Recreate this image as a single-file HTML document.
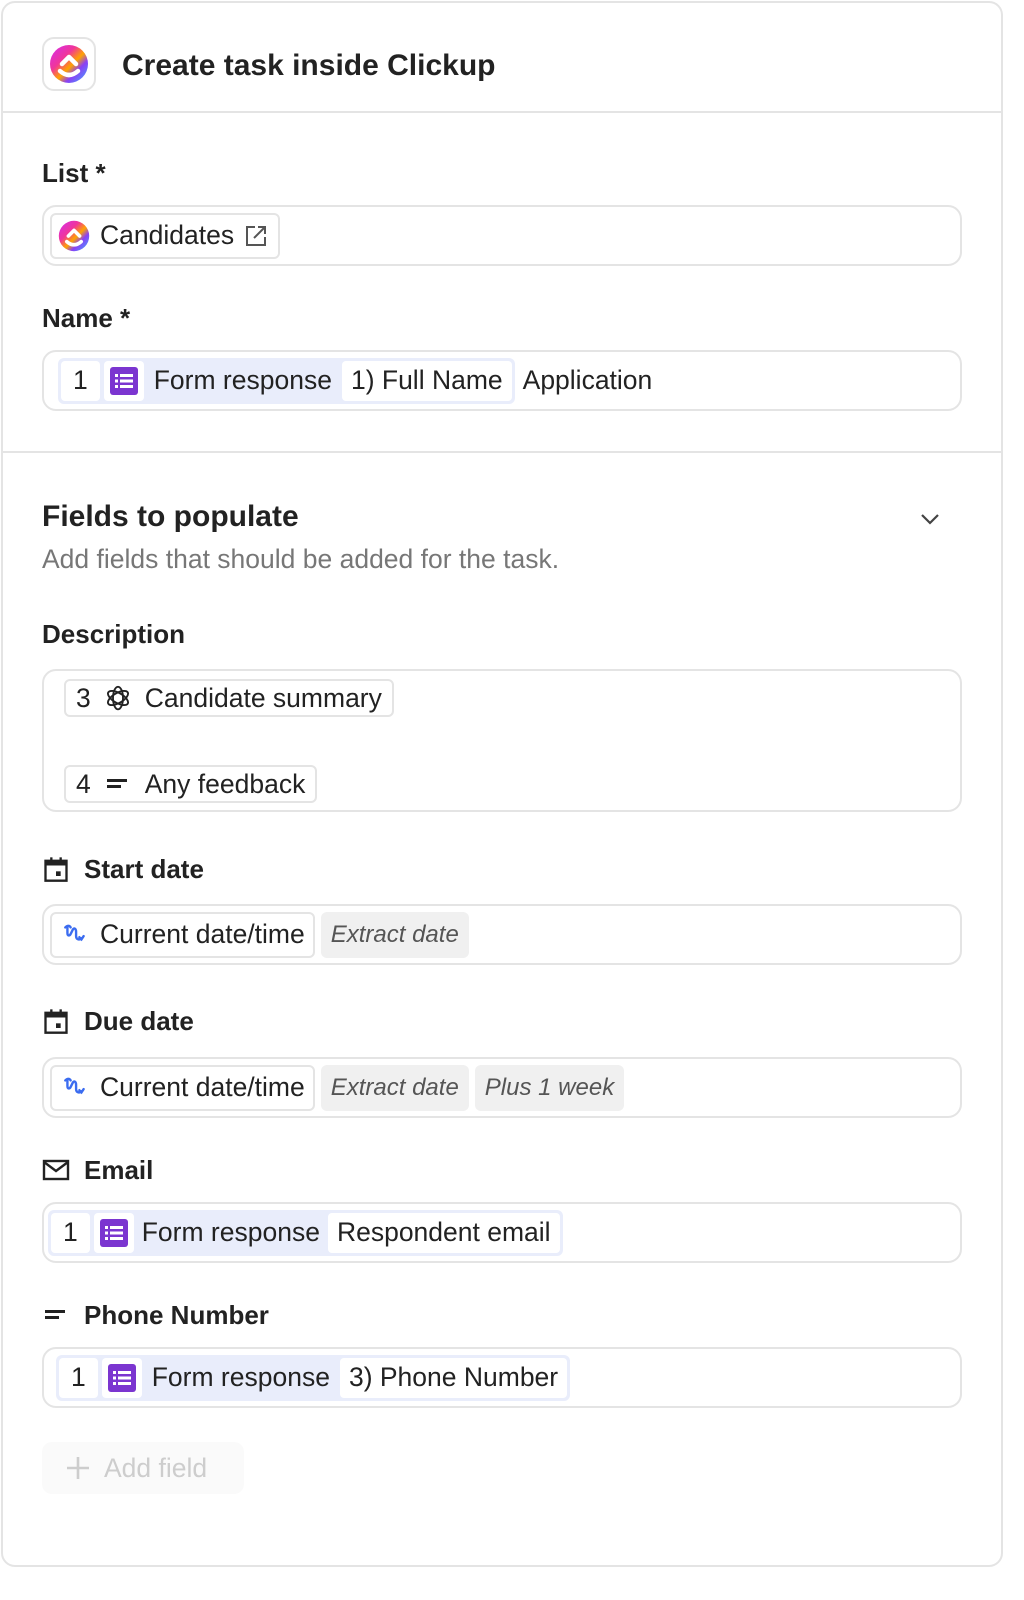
<!DOCTYPE html>
<html><head><meta charset="utf-8"><style>
*{box-sizing:border-box;margin:0;padding:0}
body{width:1024px;height:1600px;background:#fff;font-family:"Liberation Sans",sans-serif;color:#222;position:relative;overflow:hidden}
.card{position:absolute;left:1px;top:1px;width:1002px;height:1566px;border:2px solid #e4e4e4;border-radius:14px}
.abs{position:absolute}
.hr{position:absolute;left:1px;width:1002px;height:2px;background:#e4e4e4}
.lbl{position:absolute;left:42px;font-size:26px;font-weight:bold;color:#222;display:flex;align-items:center;gap:14px;line-height:30px}
.box{position:absolute;left:42px;width:920px;border:2px solid #e4e4e4;border-radius:14px}
.row{display:flex;align-items:center;height:100%;padding-left:6px;gap:6px}
.chip{display:flex;align-items:center;height:46px;border:2px solid #e4e4e4;border-radius:6px;padding:0 10px;font-size:26.5px;gap:12px;background:#fff}
.grp{display:flex;align-items:center;background:#e9edfb;border-radius:6px;height:46px;padding:3px;gap:4px;font-size:26.5px}
.w{background:#fff;border-radius:4px;height:40px;display:flex;align-items:center;padding:0 9px}
.gray{background:#f0f0f0;border-radius:6px;height:46px;display:flex;align-items:center;padding:0 10px;font-style:italic;color:#555;font-size:24px}
.fi{width:28px;height:28px;background:#7b35d0;border-radius:3px;display:flex;align-items:center;justify-content:center}
.sm{height:38px;border:2px solid #e4e4e4;border-radius:6px;display:inline-flex;align-items:center;padding:0 10px;font-size:26.5px;gap:12px;position:absolute;left:20px}
</style></head><body>
<div class="card"></div>
<svg width="0" height="0" style="position:absolute"><defs>
<linearGradient id="cg2" x1="0" y1="0" x2="1" y2="1"><stop offset="0" stop-color="#d42cf0"/><stop offset=".35" stop-color="#f0359a"/><stop offset=".55" stop-color="#ffa300"/><stop offset=".7" stop-color="#8a40f5"/><stop offset="1" stop-color="#3ab0ff"/></linearGradient>
</defs></svg>
<div class="abs" style="left:42px;top:37px;width:54px;height:54px;border:2px solid #e4e4e4;border-radius:12px;display:flex;align-items:center;justify-content:center">
<svg width="40" height="40" viewBox="0 0 40 40"><circle cx="20" cy="20" r="19" fill="url(#cg2)"/><path d="M11 27 Q20 35 29 27" stroke="#fff" stroke-width="4.5" fill="none" stroke-linecap="round"/><path d="M13 20 L20 13 L27 20" stroke="#fff" stroke-width="4.5" fill="none" stroke-linecap="round" stroke-linejoin="round"/></svg></div>
<div class="abs" style="left:122px;top:47px;font-size:30px;font-weight:bold;line-height:38px">Create task inside Clickup</div>
<div class="hr" style="top:111px"></div>

<div class="lbl" style="top:158px">List *</div>
<div class="box" style="top:205px;height:61px"><div class="row">
<div class="chip" style="padding:0 10px 0 6px;gap:10px"><svg width="32" height="32" viewBox="0 0 40 40"><circle cx="20" cy="20" r="19" fill="url(#cg2)"/><path d="M11 27 Q20 35 29 27" stroke="#fff" stroke-width="4.5" fill="none" stroke-linecap="round"/><path d="M13 20 L20 13 L27 20" stroke="#fff" stroke-width="4.5" fill="none" stroke-linecap="round" stroke-linejoin="round"/></svg>Candidates
<svg width="24" height="24" viewBox="0 0 24 24" fill="none" stroke="#555" stroke-width="2"><path d="M11 3H3v18h18v-8"/><path d="M14 3h7v7M21 3L10 14"/></svg></div></div></div>

<div class="lbl" style="top:303px">Name *</div>
<div class="box" style="top:350px;height:61px"><div class="row" style="padding-left:14px">
<div class="grp"><div class="w" style="padding:0 12px">1</div><div class="w" style="padding:0 6px"><div class="fi"><svg width="18" height="16"><g fill="#fff"><rect x="0" y="1" width="3" height="3"/><rect x="5" y="1" width="13" height="3"/><rect x="0" y="6.5" width="3" height="3"/><rect x="5" y="6.5" width="13" height="3"/><rect x="0" y="12" width="3" height="3"/><rect x="5" y="12" width="13" height="3"/></g></svg></div></div><span style="padding:0 6px">Form response</span><div class="w">1) Full Name</div></div>
<span style="font-size:26.5px;margin-left:2px">Application</span></div></div>
<div class="hr" style="top:451px"></div>

<div class="abs" style="left:42px;top:500px;font-size:30px;font-weight:bold;line-height:34px">Fields to populate</div>
<svg class="abs" style="left:919px;top:509px" width="22" height="20" viewBox="0 0 22 20"><path d="M3 6l8 8 8-8" stroke="#444" stroke-width="2.2" fill="none"/></svg>
<div class="abs" style="left:42px;top:544px;font-size:26.5px;color:#777;line-height:30px">Add fields that should be added for the task.</div>

<div class="lbl" style="top:619px">Description</div>
<div class="box" style="top:669px;height:143px">
<div class="sm" style="top:8px">3 <svg width="30" height="30" viewBox="0 0 24 24" fill="none" stroke="#222" stroke-width="1.5"><g transform="translate(12 12)"><ellipse rx="4" ry="9" transform="rotate(0)"/><ellipse rx="4" ry="9" transform="rotate(60)"/><ellipse rx="4" ry="9" transform="rotate(120)"/></g></svg> Candidate summary</div>
<div class="sm" style="top:94px">4 <svg width="30" height="20"><rect x="4" y="5" width="20" height="3" fill="#222"/><rect x="4" y="11" width="14" height="3" fill="#222"/></svg> Any feedback</div>
</div>

<div class="lbl" style="top:854px"><svg width="28" height="28" viewBox="0 0 24 24"><path d="M3 5h18v17H3z" stroke="#222" stroke-width="2" fill="none"/><rect x="3" y="5" width="18" height="4" fill="#222"/><rect x="7" y="2" width="2" height="4" fill="#222"/><rect x="15" y="2" width="2" height="4" fill="#222"/><rect x="12" y="14" width="4" height="4" fill="#222"/></svg>Start date</div>
<div class="box" style="top:904px;height:61px"><div class="row">
<div class="chip" style="padding:0 8px 0 10px"><svg width="26" height="26" viewBox="0 0 24 24" fill="none" stroke="#3b6cf0" stroke-width="2.2" stroke-linecap="round"><path d="M3 5c2-2 4-2 5 0M5 4v6c0 3 2 3 3 1l2-4c1-2 3-1 3 2v4c0 3 3 4 5 2M16 14l2 2 2-3"/></svg>Current date/time</div>
<div class="gray">Extract date</div></div></div>

<div class="lbl" style="top:1006px"><svg width="28" height="28" viewBox="0 0 24 24"><path d="M3 5h18v17H3z" stroke="#222" stroke-width="2" fill="none"/><rect x="3" y="5" width="18" height="4" fill="#222"/><rect x="7" y="2" width="2" height="4" fill="#222"/><rect x="15" y="2" width="2" height="4" fill="#222"/><rect x="12" y="14" width="4" height="4" fill="#222"/></svg>Due date</div>
<div class="box" style="top:1057px;height:61px"><div class="row">
<div class="chip" style="padding:0 8px 0 10px"><svg width="26" height="26" viewBox="0 0 24 24" fill="none" stroke="#3b6cf0" stroke-width="2.2" stroke-linecap="round"><path d="M3 5c2-2 4-2 5 0M5 4v6c0 3 2 3 3 1l2-4c1-2 3-1 3 2v4c0 3 3 4 5 2M16 14l2 2 2-3"/></svg>Current date/time</div>
<div class="gray">Extract date</div><div class="gray">Plus 1 week</div></div></div>

<div class="lbl" style="top:1155px"><svg width="28" height="24" viewBox="0 0 28 24"><rect x="2" y="3" width="24" height="18" stroke="#222" stroke-width="2.4" fill="none"/><path d="M2 4l12 9 12-9" stroke="#222" stroke-width="2.4" fill="none"/></svg>Email</div>
<div class="box" style="top:1202px;height:61px"><div class="row" style="padding-left:4px">
<div class="grp"><div class="w" style="padding:0 12px">1</div><div class="w" style="padding:0 6px"><div class="fi"><svg width="18" height="16"><g fill="#fff"><rect x="0" y="1" width="3" height="3"/><rect x="5" y="1" width="13" height="3"/><rect x="0" y="6.5" width="3" height="3"/><rect x="5" y="6.5" width="13" height="3"/><rect x="0" y="12" width="3" height="3"/><rect x="5" y="12" width="13" height="3"/></g></svg></div></div><span style="padding:0 4px">Form response</span><div class="w">Respondent email</div></div></div></div>

<div class="lbl" style="top:1300px"><svg width="28" height="20"><rect x="3" y="5" width="20" height="3" fill="#222"/><rect x="3" y="11" width="14" height="3" fill="#222"/></svg>Phone Number</div>
<div class="box" style="top:1347px;height:61px"><div class="row" style="padding-left:12px">
<div class="grp"><div class="w" style="padding:0 12px">1</div><div class="w" style="padding:0 6px"><div class="fi"><svg width="18" height="16"><g fill="#fff"><rect x="0" y="1" width="3" height="3"/><rect x="5" y="1" width="13" height="3"/><rect x="0" y="6.5" width="3" height="3"/><rect x="5" y="6.5" width="13" height="3"/><rect x="0" y="12" width="3" height="3"/><rect x="5" y="12" width="13" height="3"/></g></svg></div></div><span style="padding:0 6px">Form response</span><div class="w">3) Phone Number</div></div></div></div>

<div class="abs" style="left:42px;top:1442px;width:202px;height:52px;background:#fafafa;border-radius:10px;display:flex;align-items:center;padding-left:24px;gap:14px;color:#cdcdcd;font-size:26.5px">
<svg width="24" height="24"><path d="M12 1v22M1 12h22" stroke="#cdcdcd" stroke-width="2.6"/></svg>Add field</div>
</body></html>
